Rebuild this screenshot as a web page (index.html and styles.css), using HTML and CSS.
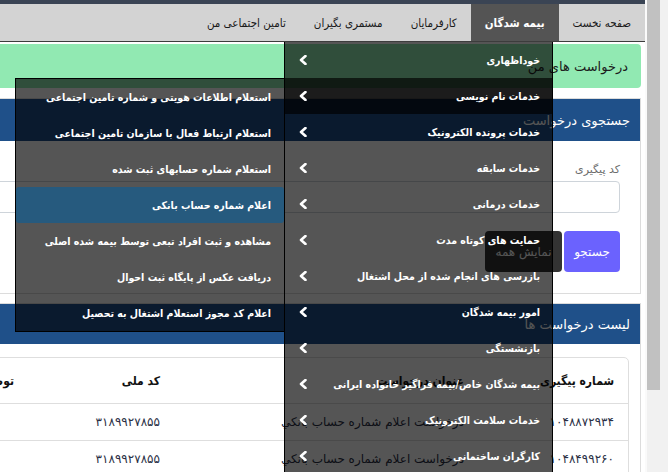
FILE: index.html
```html
<!DOCTYPE html>
<html lang="fa" dir="rtl">
<head>
<meta charset="utf-8">
<link rel="stylesheet" href="styles.css">
</head>
<body>
<div class="viewport">
  <div class="page">
    <div class="topbar"></div>
    <nav class="navbar">
      <ul class="nav">
        <li class="nav-item">صفحه نخست</li>
        <li class="nav-item active">بیمه شدگان</li>
        <li class="nav-item">کارفرمایان</li>
        <li class="nav-item">مستمری بگیران</li>
        <li class="nav-item">تامین اجتماعی من</li>
      </ul>
    </nav>
    <main class="content">
      <div class="alert">درخواست های من</div>
      <section class="card search-card">
        <div class="card-head">جستجوی درخواست</div>
        <div class="card-body search-body">
          <label class="label">کد پیگیری</label>
          <div class="input"></div>
          <div class="btns">
            <span class="btn btn-primary">جستجو</span>
            <span class="btn btn-dark">نمایش همه</span>
          </div>
        </div>
      </section>
      <section class="card list-card">
        <div class="card-head list-head">لیست درخواست ها</div>
        <div class="card-body list-body">
          <table class="tbl">
            <colgroup><col class="w1"><col class="w2"><col class="w3"><col class="w4"></colgroup>
            <thead>
              <tr><th>شماره پیگیری</th><th>عنوان درخواست</th><th>کد ملی</th><th>توضیحات</th></tr>
            </thead>
            <tbody>
              <tr><td>۱۰۴۸۸۷۲۹۳۴</td><td>درخواست اعلام شماره حساب بانکي</td><td>۳۱۸۹۹۲۷۸۵۵</td><td></td></tr>
              <tr><td>۱۰۴۸۴۹۹۲۶۰</td><td>درخواست اعلام شماره حساب بانکي</td><td>۳۱۸۹۹۲۷۸۵۵</td><td></td></tr>
            </tbody>
          </table>
        </div>
      </section>
    </main>

    <ul class="menu">
      <li class="menu-item"><span>خوداظهاری</span><svg class="chev" viewBox="0 0 8 10" width="8" height="10"><polyline points="6.5,1 2,5 6.5,9" fill="none" stroke="#fff" stroke-width="2.6" stroke-linejoin="round" stroke-linecap="round"/></svg></li>
      <li class="menu-item hover"><span>خدمات نام نویسی</span><svg class="chev" viewBox="0 0 8 10" width="8" height="10"><polyline points="6.5,1 2,5 6.5,9" fill="none" stroke="#fff" stroke-width="2.6" stroke-linejoin="round" stroke-linecap="round"/></svg></li>
      <li class="menu-item"><span>خدمات پرونده الکترونیک</span><svg class="chev" viewBox="0 0 8 10" width="8" height="10"><polyline points="6.5,1 2,5 6.5,9" fill="none" stroke="#fff" stroke-width="2.6" stroke-linejoin="round" stroke-linecap="round"/></svg></li>
      <li class="menu-item"><span>خدمات سابقه</span><svg class="chev" viewBox="0 0 8 10" width="8" height="10"><polyline points="6.5,1 2,5 6.5,9" fill="none" stroke="#fff" stroke-width="2.6" stroke-linejoin="round" stroke-linecap="round"/></svg></li>
      <li class="menu-item"><span>خدمات درمانی</span><svg class="chev" viewBox="0 0 8 10" width="8" height="10"><polyline points="6.5,1 2,5 6.5,9" fill="none" stroke="#fff" stroke-width="2.6" stroke-linejoin="round" stroke-linecap="round"/></svg></li>
      <li class="menu-item"><span>حمایت های کوتاه مدت</span><svg class="chev" viewBox="0 0 8 10" width="8" height="10"><polyline points="6.5,1 2,5 6.5,9" fill="none" stroke="#fff" stroke-width="2.6" stroke-linejoin="round" stroke-linecap="round"/></svg></li>
      <li class="menu-item"><span>بازرسی های انجام شده از محل اشتغال</span><svg class="chev" viewBox="0 0 8 10" width="8" height="10"><polyline points="6.5,1 2,5 6.5,9" fill="none" stroke="#fff" stroke-width="2.6" stroke-linejoin="round" stroke-linecap="round"/></svg></li>
      <li class="menu-item"><span>امور بیمه شدگان</span><svg class="chev" viewBox="0 0 8 10" width="8" height="10"><polyline points="6.5,1 2,5 6.5,9" fill="none" stroke="#fff" stroke-width="2.6" stroke-linejoin="round" stroke-linecap="round"/></svg></li>
      <li class="menu-item"><span>بازنشستگی</span><svg class="chev" viewBox="0 0 8 10" width="8" height="10"><polyline points="6.5,1 2,5 6.5,9" fill="none" stroke="#fff" stroke-width="2.6" stroke-linejoin="round" stroke-linecap="round"/></svg></li>
      <li class="menu-item"><span>بیمه شدگان خاص/بیمه فراگیر خانواده ایرانی</span><svg class="chev" viewBox="0 0 8 10" width="8" height="10"><polyline points="6.5,1 2,5 6.5,9" fill="none" stroke="#fff" stroke-width="2.6" stroke-linejoin="round" stroke-linecap="round"/></svg></li>
      <li class="menu-item"><span>خدمات سلامت الکترونیک</span><svg class="chev" viewBox="0 0 8 10" width="8" height="10"><polyline points="6.5,1 2,5 6.5,9" fill="none" stroke="#fff" stroke-width="2.6" stroke-linejoin="round" stroke-linecap="round"/></svg></li>
      <li class="menu-item"><span>کارگران ساختمانی</span><svg class="chev" viewBox="0 0 8 10" width="8" height="10"><polyline points="6.5,1 2,5 6.5,9" fill="none" stroke="#fff" stroke-width="2.6" stroke-linejoin="round" stroke-linecap="round"/></svg></li>
    </ul>

    <ul class="submenu">
      <li class="sub-item">استعلام اطلاعات هویتی و شماره تامین اجتماعی</li>
      <li class="sub-item">استعلام ارتباط فعال با سازمان تامین اجتماعی</li>
      <li class="sub-item">استعلام شماره حسابهای ثبت شده</li>
      <li class="sub-item selected">اعلام شماره حساب بانکی</li>
      <li class="sub-item">مشاهده و ثبت افراد تبعی توسط بیمه شده اصلی</li>
      <li class="sub-item">دریافت عکس از پایگاه ثبت احوال</li>
      <li class="sub-item">اعلام کد مجوز استعلام اشتغال به تحصیل</li>
    </ul>
  </div>
  <div class="scrollbar"><div class="thumb"></div></div>
</div>
</body>
</html>
```
FILE: styles.css
```css
* { box-sizing: border-box; }
html, body { margin: 0; padding: 0; }
body {
  width: 668px;
  height: 472px;
  overflow: hidden;
  background: #fff;
  font-family: "DejaVu Sans", "Noto Sans", sans-serif;
  color: #212529;
}
.viewport {
  display: flex;
  direction: ltr;
  width: 668px;
  height: 472px;
}
.page {
  position: relative;
  width: 645px;
  height: 472px;
  overflow: hidden;
  direction: rtl;
  flex: none;
}
.topbar { height: 4px; background: #3a4454; }
.navbar {
  height: 38px;
  background: #d3d3d3;
  border-bottom: 1px solid #3c3c3c;
}
.nav {
  list-style: none;
  margin: 0;
  padding: 0;
  display: flex;
  height: 37px;
}
.nav-item {
  display: flex;
  align-items: center;
  padding: 0 14px;
  font-family: "DejaVu Sans Condensed", "DejaVu Sans", sans-serif;
  font-stretch: condensed;
  font-size: 11.5px;
  color: #1a1a1a;
}
.nav-item.active {
  background: #545454;
  color: #fff;
  font-weight: bold;
}
.content {
  width: 900px;
  margin-right: 4px;
  padding-top: 2px;
}
.alert {
  height: 44px;
  background: #91e9b2;
  border-radius: 4px;
  display: flex;
  align-items: center;
  padding-right: 13px;
  font-size: 13px;
  color: #1b1b1b;
}
.card {
  border: 1px solid #dcdcdc;
  background: #fff;
}
.search-card { margin-top: 10px; }
.list-card { margin-top: 9px; }
.card-head {
  height: 42px;
  background: #1f5089;
  color: #fff;
  font-size: 13px;
  display: flex;
  align-items: center;
  padding-right: 10px;
}
.list-head { height: 40px; }
.search-body { padding: 20px 20px 21px 20px; }
.label {
  display: block;
  font-size: 11px;
  color: #6c6c6c;
  height: 20px;
  line-height: 18px;
}
.input {
  height: 32px;
  border: 1px solid #ced4da;
  border-radius: 4px;
  background: #fff;
}
.btns {
  display: flex;
  gap: 2px;
  margin-top: 18px;
}
.btn {
  height: 41px;
  display: flex;
  align-items: center;
  justify-content: center;
  border-radius: 4px;
  font-size: 12px;
  color: #fff;
}
.btn-primary { width: 56px; background: #6b62fe; }
.btn-dark { width: 77px; background: #333; }
.list-body { padding: 13px 11px 0 0; }
.tbl {
  border-collapse: separate;
  border-spacing: 0;
  border: 1px solid #dedede;
  border-radius: 5px;
  table-layout: fixed;
  width: 820px;
  font-size: 12px;
}
.w1 { width: 150px; }
.w2 { width: 304px; }
.w3 { width: 146px; }
.w4 { width: 220px; }
.tbl th, .tbl td {
  text-align: right;
  padding: 0 14px;
  white-space: nowrap;
  overflow: hidden;
}
.tbl th {
  height: 45px;
  font-family: "DejaVu Sans Condensed", "DejaVu Sans", sans-serif;
  font-stretch: condensed;
  font-weight: bold;
  color: #111;
}
.tbl td {
  height: 37px;
  border-top: 1px solid #dedede;
  color: #2a2f45;
}
.menu {
  position: absolute;
  left: 284px;
  top: 42px;
  width: 269px;
  margin: 0;
  padding: 0;
  list-style: none;
  background: rgba(0, 0, 0, 0.667);
  border-left: 1px solid #000;
  border-right: 1px solid #000;
}
.menu-item {
  height: 36px;
  display: flex;
  align-items: center;
  justify-content: space-between;
  padding: 0 12px 0 14px;
  color: #fff;
  font-family: "DejaVu Sans Condensed", "DejaVu Sans", sans-serif;
  font-stretch: condensed;
  font-weight: bold;
  font-size: 10.5px;
  white-space: nowrap;
}
.menu-item.hover { background: rgba(0, 0, 0, 0.667); }
.chev { display: block; flex: none; }
.submenu {
  position: absolute;
  left: 15px;
  top: 78px;
  width: 270px;
  margin: 0;
  padding: 0;
  list-style: none;
  background: rgba(0, 0, 0, 0.667);
  border: 1px solid #000;
}
.sub-item {
  height: 36px;
  display: flex;
  align-items: center;
  padding-right: 13px;
  color: #fff;
  font-family: "DejaVu Sans Condensed", "DejaVu Sans", sans-serif;
  font-stretch: condensed;
  font-weight: bold;
  font-size: 10.5px;
  white-space: nowrap;
}
.sub-item.selected {
  background: #265a7e;
  border-radius: 3px;
}
.scrollbar {
  width: 23px;
  height: 472px;
  background: #f1f1f1;
  border-left: 2px solid #fafafa;
  flex: none;
}
.thumb {
  width: 13px;
  height: 390px;
  background: #c1c1c1;
}
```
